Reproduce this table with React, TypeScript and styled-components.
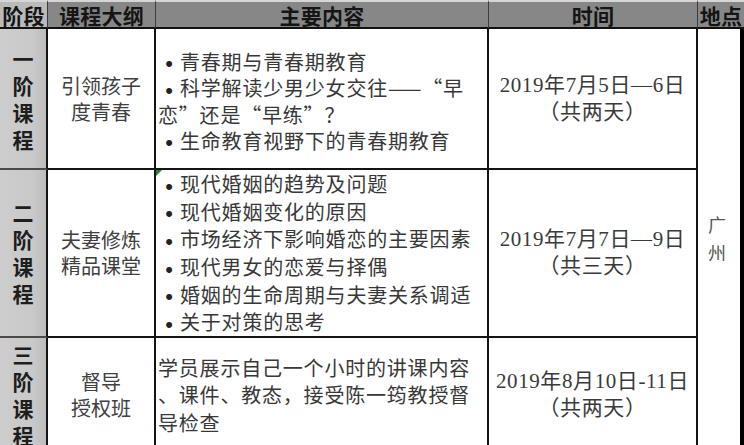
import React from "react";
import styled, { createGlobalStyle } from "styled-components";

const GlobalStyle = createGlobalStyle`
  html, body { margin: 0; padding: 0; background: #fff; overflow: hidden; }
  body { font-family: "Noto Sans CJK SC", "Noto Sans", sans-serif; }
  * { box-sizing: border-box; }
`;

const Sheet = styled.div`
  display: grid;
  grid-template-columns: 48px 108px 333px 209px 47px;
  grid-template-rows: 29px 141px 168px 116px;
  width: 744px;
  height: 445px;
  overflow: hidden;
  background: #fff;
`;

const HeaderCell = styled.div<{ $light?: boolean }>`
  display: flex;
  align-items: center;
  justify-content: center;
  background: ${(p) => (p.$light ? "#bababa" : "#878787")};
  border-top: 2px solid #d6d6d6;
  border-bottom: 2px solid #111;
  border-right: 1px solid #3c3c3c;
  font-size: 21px;
  font-weight: 700;
  color: #151515;
  white-space: nowrap;
  letter-spacing: 0.3px;
`;

const BodyCell = styled.div<{ $align?: "left" | "center" }>`
  position: relative;
  display: flex;
  align-items: center;
  justify-content: ${(p) => (p.$align === "left" ? "flex-start" : "center")};
  padding-left: ${(p) => (p.$align === "left" ? "2px" : "0")};
  border-right: 2px solid #141414;
  border-bottom: 2px solid #141414;
  color: #3a3a3a;
  white-space: nowrap;
`;

const StageCell = styled(BodyCell)`
  background: linear-gradient(to right, #cdcdcd 0%, #c9c9c9 70%, #bdbdbd 100%);
  border-bottom-color: #4a4a4a;
`;

const StageText = styled.div`
  width: 1em;
  font-size: 21px;
  font-weight: 700;
  line-height: 27px;
  color: #1e1e1e;
  white-space: normal;
  text-align: center;
  word-break: break-all;
`;

const OutlineText = styled.div`
  font-size: 20px;
  line-height: 26px;
  text-align: center;
  color: #404040;
`;

const ContentList = styled.div<{ $lh: number; $shift?: number }>`
  font-size: 20px;
  letter-spacing: 0.8px;
  line-height: ${(p) => p.$lh}px;
  color: #383838;
  margin-top: ${(p) => p.$shift ?? 0}px;
`;

const Item = styled.div``;

const Bullet = styled.span`
  display: inline-block;
  width: 22px;
  text-align: center;
  font-family: "Liberation Sans", sans-serif;
  font-size: 22px;
  line-height: 1;
  vertical-align: middle;
  letter-spacing: 0;
  color: #222;
`;

const TimeText = styled.div`
  font-family: "Liberation Serif", "Noto Sans CJK SC", serif;
  font-size: 21px;
  letter-spacing: 0.6px;
  line-height: 27px;
  text-align: center;
  color: #3a3a3a;
`;

const PlaceCell = styled(BodyCell)`
  grid-column: 5;
  grid-row: 2 / span 3;
  border-right: 5px solid #000;
  border-bottom: none;
`;

const PlaceText = styled.div`
  width: 1em;
  font-size: 18px;
  line-height: 28px;
  color: #555;
  white-space: normal;
  word-break: break-all;
  text-align: center;
  margin-left: -4px;
  margin-top: -8px;
`;

const ErrorMark = styled.span`
  position: absolute;
  top: 0;
  left: 0;
  width: 0;
  height: 0;
  border-top: 6px solid #2f7d2f;
  border-right: 6px solid transparent;
`;

type Row = {
  stage: string;
  outline: string[];
  content: React.ReactNode;
  time: string[];
  mark?: boolean;
};

const rows: Row[] = [
  {
    stage: "一阶课程",
    outline: ["引领孩子", "度青春"],
    content: (
      <ContentList $lh={26} $shift={6}>
        <Item>
          <Bullet>•</Bullet>青春期与青春期教育
        </Item>
        <Item>
          <Bullet>•</Bullet>科学解读少男少女交往——“早
          <br />
          恋”还是“早练”？
        </Item>
        <Item>
          <Bullet>•</Bullet>生命教育视野下的青春期教育
        </Item>
      </ContentList>
    ),
    time: ["2019年7月5日—6日", "（共两天）"],
  },
  {
    stage: "二阶课程",
    outline: ["夫妻修炼", "精品课堂"],
    content: (
      <ContentList $lh={27.6}>
        {[
          "现代婚姻的趋势及问题",
          "现代婚姻变化的原因",
          "市场经济下影响婚恋的主要因素",
          "现代男女的恋爱与择偶",
          "婚姻的生命周期与夫妻关系调适",
          "关于对策的思考",
        ].map((t) => (
          <Item key={t}>
            <Bullet>•</Bullet>
            {t}
          </Item>
        ))}
      </ContentList>
    ),
    time: ["2019年7月7日—9日", "（共三天）"],
    mark: true,
  },
  {
    stage: "三阶课程",
    outline: ["督导", "授权班"],
    content: (
      <ContentList $lh={27.5}>
        <Item>学员展示自己一个小时的讲课内容</Item>
        <Item>、课件、教态，接受陈一筠教授督</Item>
        <Item>导检查</Item>
      </ContentList>
    ),
    time: ["2019年8月10日-11日", "（共两天）"],
  },
];

export default function App() {
  return (
    <>
      <GlobalStyle />
      <Sheet>
        <HeaderCell $light>阶段</HeaderCell>
        <HeaderCell>课程大纲</HeaderCell>
        <HeaderCell>主要内容</HeaderCell>
        <HeaderCell>时间</HeaderCell>
        <HeaderCell>地点</HeaderCell>
        {rows.map((r, i) => (
          <React.Fragment key={r.stage}>
            <StageCell>
              <StageText>{r.stage}</StageText>
            </StageCell>
            <BodyCell>
              <OutlineText>
                {r.outline.map((l) => (
                  <div key={l}>{l}</div>
                ))}
              </OutlineText>
            </BodyCell>
            <BodyCell $align="left">
              {r.mark && <ErrorMark />}
              {r.content}
            </BodyCell>
            <BodyCell>
              <TimeText>
                {r.time.map((l) => (
                  <div key={l}>{l}</div>
                ))}
              </TimeText>
            </BodyCell>
            {i === 0 && (
              <PlaceCell>
                <PlaceText>广州</PlaceText>
              </PlaceCell>
            )}
          </React.Fragment>
        ))}
      </Sheet>
    </>
  );
}
